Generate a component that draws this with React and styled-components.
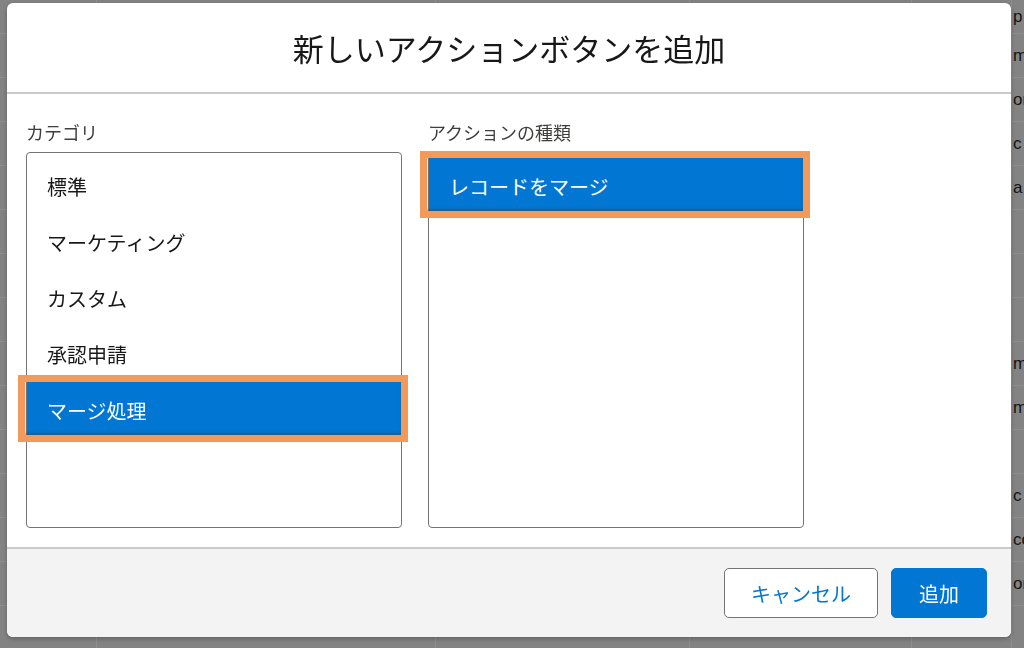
import React, { useState } from "react";
import styled, { createGlobalStyle } from "styled-components";

const GlobalStyle = createGlobalStyle`
  html, body {
    margin: 0;
    padding: 0;
    height: 100%;
    background: #838383;
    overflow: hidden;
  }
  body {
    font-family: "Noto Sans CJK JP", "Noto Sans", sans-serif;
  }
`;

const categories = ["標準", "マーケティング", "カスタム", "承認申請", "マージ処理"];
const actionsByCategory = {
  標準: ["新規レコード", "レコードを更新"],
  マーケティング: ["メールを送信"],
  カスタム: ["カスタムアクション"],
  承認申請: ["承認申請を送信"],
  マージ処理: ["レコードをマージ"],
};

// rows of the page that sits behind the dialog
const backRows = [
  "p", "m", "or", "c", "a", "", "", "",
  "m", "m", "", "c", "co", "or", "",
];

export default function App() {
  const [category, setCategory] = useState("マージ処理");
  const [action, setAction] = useState("レコードをマージ");

  return (
    <>
      <GlobalStyle />
      <Backdrop>
        {backRows.map((word, i) => (
          <BackRow key={i}>
            <BackCell />
            <BackCell />
            <BackCell />
            <BackCell />
            <BackCell />
            <BackText>{word}</BackText>
          </BackRow>
        ))}
      </Backdrop>

      <Overlay>
        <Modal>
          <Header>
            <Title>新しいアクションボタンを追加</Title>
          </Header>
          <Body>
            <Column>
              <Label>カテゴリ</Label>
              <ListBox>
                {categories.map((c) => (
                  <Option
                    key={c}
                    $selected={c === category}
                    onClick={() => {
                      setCategory(c);
                      setAction(actionsByCategory[c][0]);
                    }}
                  >
                    {c}
                  </Option>
                ))}
              </ListBox>
            </Column>
            <Column>
              <Label>アクションの種類</Label>
              <ListBox>
                {actionsByCategory[category].map((a) => (
                  <Option key={a} $selected={a === action} onClick={() => setAction(a)}>
                    {a}
                  </Option>
                ))}
              </ListBox>
            </Column>
          </Body>
          <Footer>
            <Button>キャンセル</Button>
            <Button $primary>追加</Button>
          </Footer>
        </Modal>
      </Overlay>
    </>
  );
}

const Backdrop = styled.div`
  height: 100vh;
  overflow: hidden;
  font-family: "Liberation Sans", Arial, sans-serif;
  font-size: 17px;
  color: #141414;
`;
const BackRow = styled.div`
  display: grid;
  grid-template-columns: 97px 339px 254px 222px 100px 1fr;
  height: 44px;
  margin-top: ${(p) => (p.$first ? "-10px" : "0")};
  border-bottom: 1px solid #8e8e8e;
  box-sizing: border-box;
  &:first-child {
    height: 34px;
  }
`;
const BackCell = styled.div`
  border-right: 1px solid #8e8e8e;
`;
const BackText = styled.div`
  display: flex;
  align-items: center;
  padding-left: 1px;
  white-space: nowrap;
  overflow: hidden;
`;

const Overlay = styled.div`
  position: fixed;
  inset: 0;
  padding: 3px 13px 11px 7px;
  display: flex;
`;
const Modal = styled.div`
  flex: 1;
  display: flex;
  flex-direction: column;
  background: #ffffff;
  border-radius: 6px;
  overflow: hidden;
  box-shadow: 0 2px 4px rgba(0, 0, 0, 0.25);
`;
const Header = styled.div`
  height: 89px;
  display: flex;
  align-items: center;
  justify-content: center;
  border-bottom: 2px solid #cacaca;
`;
const Title = styled.h1`
  margin: 0;
  font-size: 31px;
  font-weight: 400;
  color: #181818;
`;
const Body = styled.div`
  flex: 1;
  display: flex;
  gap: 26px;
  padding: 27px 19px 19px;
`;
const Column = styled.div`
  width: 376px;
  display: flex;
  flex-direction: column;
`;
const Label = styled.div`
  font-size: 18px;
  line-height: 22px;
  color: #3e3e3c;
  margin-bottom: 9px;
`;
const ListBox = styled.div`
  height: 376px;
  box-sizing: border-box;
  border: 1px solid #747474;
  border-radius: 4px;
  padding: 5px 0;
`;
const Option = styled.div`
  position: relative;
  height: 56px;
  display: flex;
  align-items: center;
  padding-left: 20px;
  font-size: 20px;
  color: ${(p) => (p.$selected ? "#ffffff" : "#181818")};
  background: ${(p) => (p.$selected ? "#0176d3" : "transparent")};
  cursor: pointer;

  ${(p) =>
    p.$selected &&
    `
    &::after {
      content: "";
      position: absolute;
      top: -7px;
      bottom: -4px;
      left: -9px;
      right: -7px;
      border: 7px solid #f29a5c;
      box-shadow: inset 0 -2px 2px rgba(90, 50, 20, 0.35);
      pointer-events: none;
    }
  `}
`;
const Footer = styled.div`
  height: 88px;
  display: flex;
  align-items: center;
  justify-content: flex-end;
  gap: 13px;
  padding: 0 24px;
  background: #f3f3f3;
  border-top: 2px solid #cacaca;
`;
const Button = styled.button`
  height: 50px;
  padding: 0 ${(p) => (p.$primary ? "27px" : "26px")};
  font-family: "Noto Sans CJK JP", sans-serif;
  font-size: 20px;
  border-radius: 5px;
  border: 1px solid ${(p) => (p.$primary ? "#0176d3" : "#747474")};
  background: ${(p) => (p.$primary ? "#0176d3" : "#ffffff")};
  color: ${(p) => (p.$primary ? "#ffffff" : "#0176d3")};
  cursor: pointer;
`;
